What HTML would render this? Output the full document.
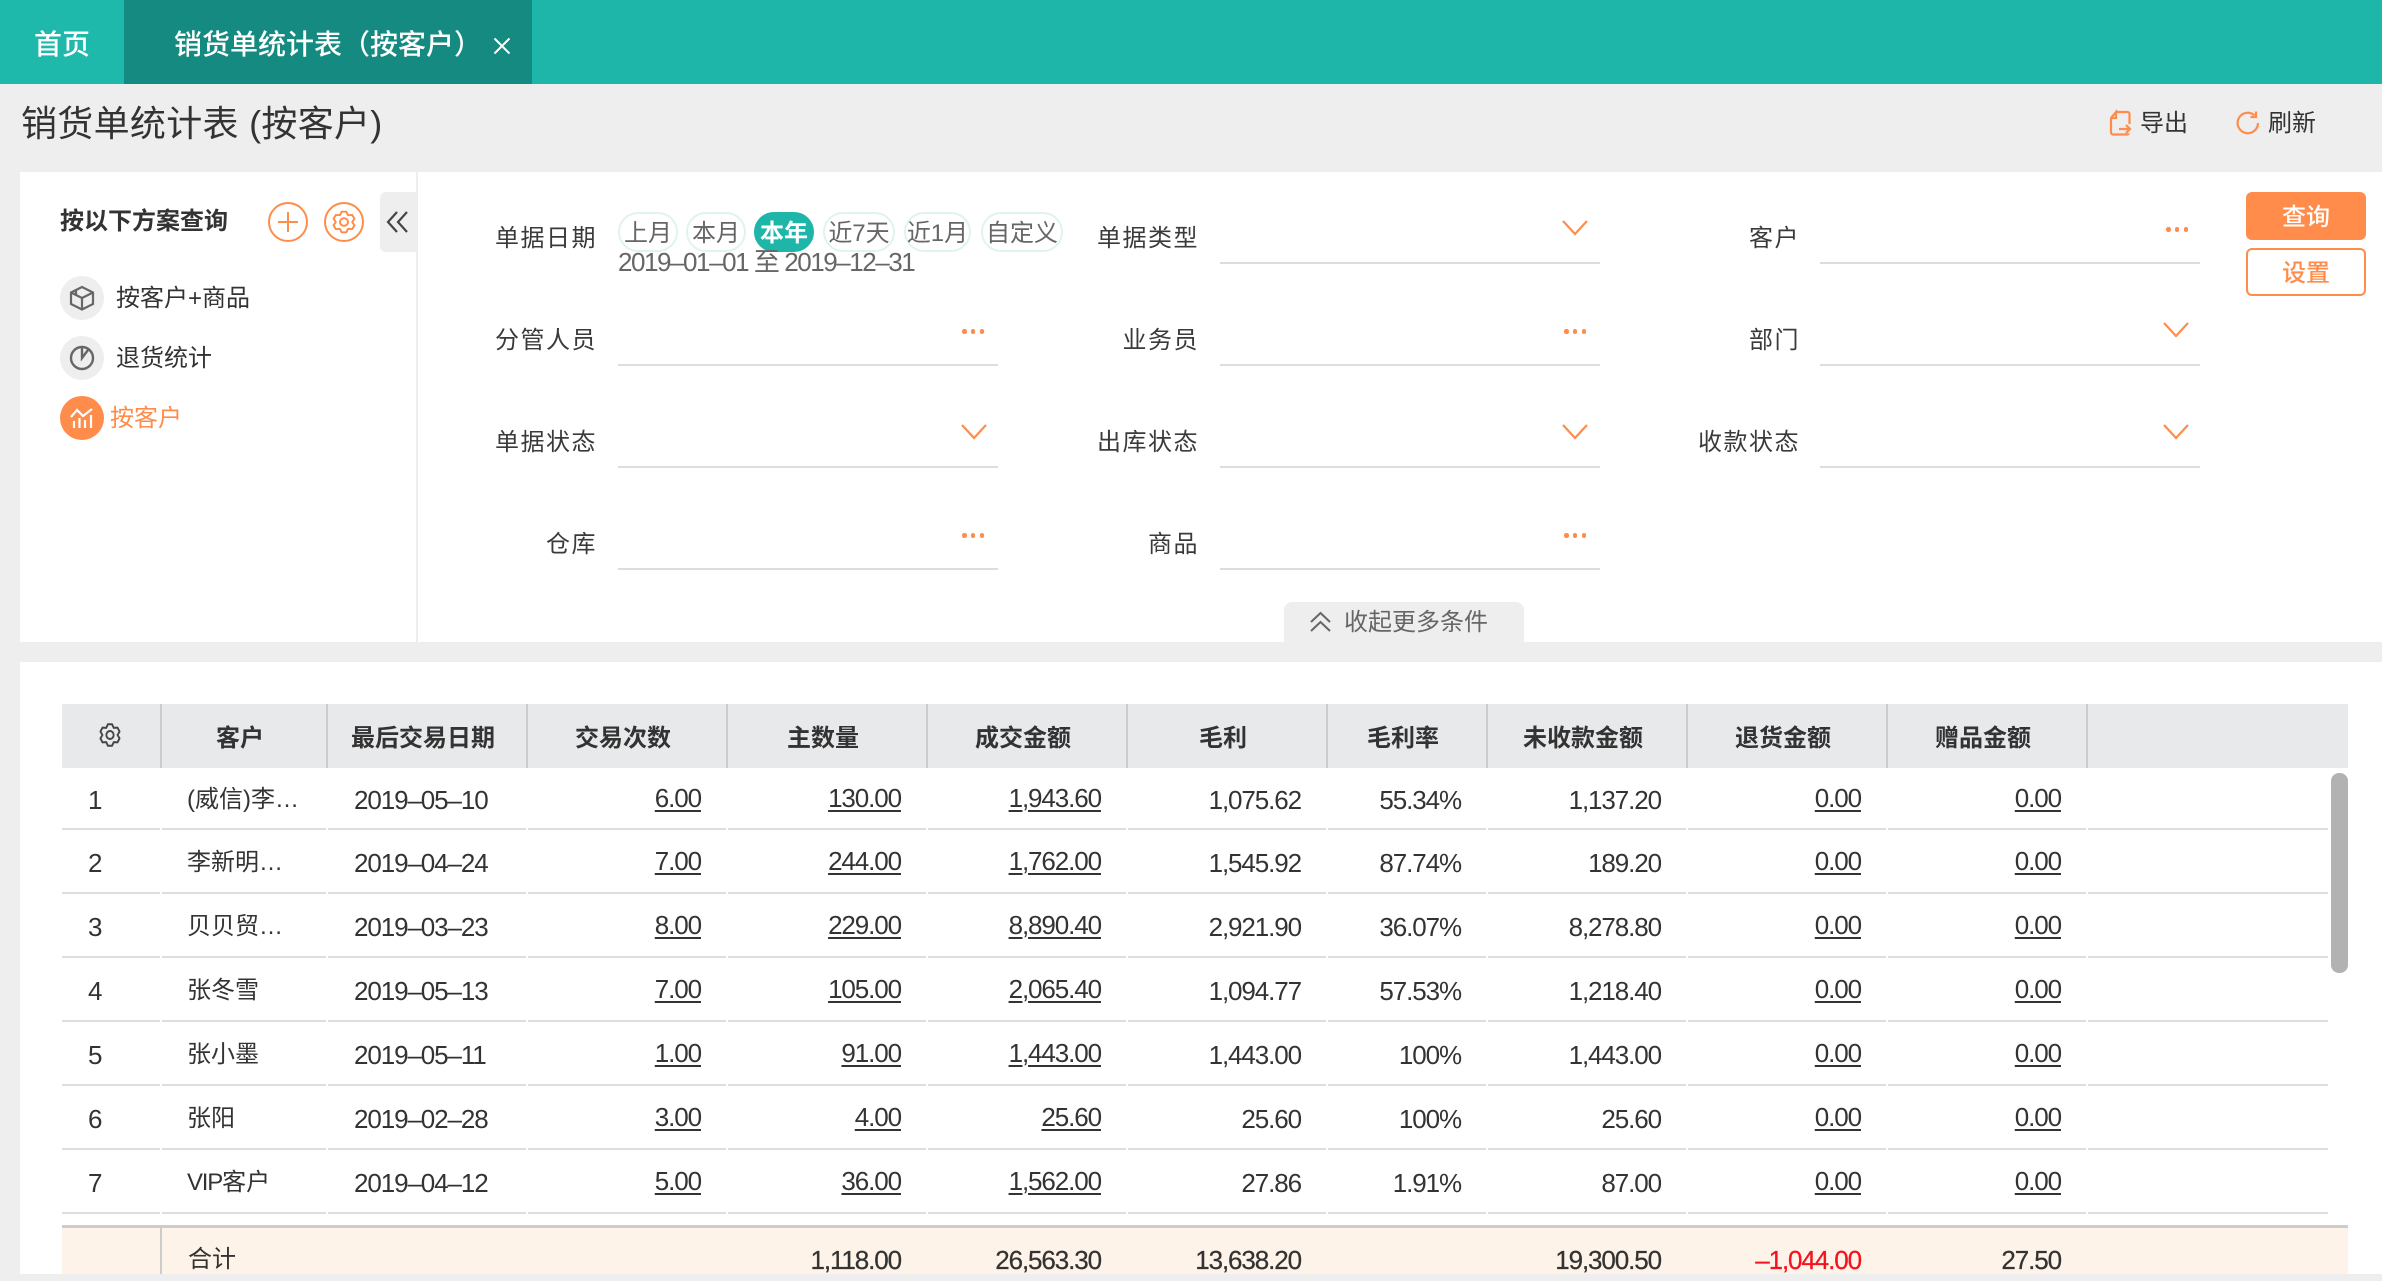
<!DOCTYPE html>
<html lang="zh">
<head>
<meta charset="utf-8">
<title>销货单统计表（按客户）</title>
<style>
html,body{margin:0;padding:0}
body{width:2382px;height:1274px;overflow:hidden;position:relative;background:#eeeeee;color:#333;font-family:"Liberation Sans","Noto Sans CJK SC",sans-serif;font-size:24px}
.a{position:absolute;white-space:nowrap}
.c{line-height:42px;height:40px}
.tab{top:0;height:84px;line-height:89px;color:#fff;font-size:28px;font-weight:500}
.panel{background:#fff;position:absolute}
.lbl{width:200px;text-align:right;letter-spacing:1.5px;line-height:44px;height:40px;color:#3a3a3a}
.line{height:2px;background:#dddddd;width:380px}
.dots{width:22px;height:4px;display:flex;justify-content:space-between}
.dots i{display:block;width:4.5px;height:4.5px;border-radius:50%;background:#ff8c4a}
.pill{top:212px;height:40px;line-height:40px;box-sizing:border-box;border:2px solid #dff3f1;border-radius:20px;text-align:center;color:#666;background:#fff}
.round{width:44px;height:44px;border-radius:50%;background:#eeeeee}
table{position:absolute;left:62px;top:704px;width:2266px;border-collapse:separate;border-spacing:0;table-layout:fixed;font-size:26px;letter-spacing:-1.1px}
th{height:64px;padding:0 8px 2px 0;background:#e8e9eb;border-right:2px solid #cccccc;box-sizing:border-box;font-weight:700;font-size:24px;letter-spacing:0;color:#333;text-align:center}
td{height:64px;box-sizing:border-box;border-bottom:2px solid #dddddd;padding:3px 27px 0 0;line-height:28px;text-align:right;white-space:nowrap;color:#333}
tr.f td{height:62px}
td.l{text-align:left;padding:3px 0 0 26px}
td.k{text-align:left;padding:3px 0 0 25px;font-size:24px;letter-spacing:0}
td.d{text-align:left;padding:3px 0 0 26px}
td u{position:relative;top:-2px;text-underline-offset:3px;text-decoration-thickness:2px}
.tot{position:absolute;left:62px;top:1225px;width:2286px;height:49px;background:#fdf3e8;border-top:3px solid #cccccc;box-sizing:border-box}
.tick{position:absolute;top:768px;width:2px;height:448px;background:#fff}
.n{font-size:26px;letter-spacing:-1.1px;line-height:40px;height:40px;top:1240px;-webkit-text-stroke:.25px currentColor}
</style>
</head>
<body>
<!-- top tabs -->
<div class="a" style="left:0;top:0;width:2382px;height:84px;background:#1db6a9"></div>
<div class="a" style="left:0;top:0;width:124px;height:84px;background:#1fb9ac"></div>
<div class="a" style="left:124px;top:0;width:408px;height:84px;background:#158a80"></div>
<div class="a tab" style="left:34px">首页</div>
<div class="a tab" style="left:174px">销货单统计表（按客户）</div>
<svg class="a" style="left:492px;top:36px" width="20" height="20" viewBox="0 0 20 20"><path d="M2.500 2.500L17.500 17.500M17.500 2.500L2.500 17.500" stroke="#fff" stroke-width="2" fill="none"/></svg>

<!-- title bar -->
<div class="a" style="left:21px;top:99px;font-size:36px;line-height:50px;color:#333;letter-spacing:.3px">销货单统计表 (按客户)</div>
<svg class="a" style="left:2108px;top:109px" width="24" height="28" viewBox="0 0 24 28" fill="none" stroke="#ff8c4a" stroke-width="2.200"><path d="M8 3H19.500a2 2 0 0 1 2 2V15M21 24.500a2 2 0 0 1-1.500 1H5a2 2 0 0 1-2-2V9L8 3V9H3"/><path d="M11 20H22M18 16L22 20L18 24"/></svg>
<div class="a c" style="left:2140px;top:103px">导出</div>
<svg class="a" style="left:2235px;top:110px" width="26" height="26" viewBox="0 0 26 26" fill="none" stroke="#ff8c4a" stroke-width="2.200"><path d="M23 13a10.200 10.200 0 1 1-3.500-7.700"/><path d="M21 1.500V7H15.500"/></svg>
<div class="a c" style="left:2268px;top:103px">刷新</div>

<!-- filter panel -->
<div class="panel" style="left:20px;top:172px;width:2362px;height:470px"></div>
<div class="a" style="left:416px;top:172px;width:2px;height:470px;background:#eeeeee"></div>

<!-- left scheme -->
<div class="a c" style="left:60px;top:201px;font-weight:700">按以下方案查询</div>
<svg class="a" style="left:268px;top:202px" width="40" height="40" viewBox="0 0 40 40" fill="none" stroke="#ff8c4a" stroke-width="2"><circle cx="20" cy="20" r="19"/><path d="M20 10V30M10 20H30"/></svg>
<svg class="a" style="left:324px;top:202px" width="40" height="40" viewBox="0 0 40 40" fill="none" stroke="#ff8c4a" stroke-width="2"><circle cx="20" cy="20" r="19"/><g transform="translate(8 8.500) scale(1 .96)" stroke-linejoin="round"><path d="M9.710 1.240L14.290 1.240L16.100 4.900L20.170 4.640L22.460 8.600L20.200 12L22.460 15.400L20.170 19.360L16.100 19.100L14.290 22.760L9.710 22.760L7.900 19.100L3.830 19.360L1.540 15.400L3.800 12L1.540 8.600L3.830 4.640L7.900 4.900Z"/><circle cx="12" cy="12" r="4"/></g></svg>
<div class="a" style="left:380px;top:192px;width:36px;height:60px;background:#eeeeee;border-radius:6px 0 0 6px"></div>
<svg class="a" style="left:386px;top:211px" width="22" height="22" viewBox="0 0 22 22" fill="none" stroke="#444" stroke-width="2.200"><path d="M11 1L2 11L11 21M21 1L12 11L21 21"/></svg>

<div class="a round" style="left:60px;top:276px"></div>
<svg class="a" style="left:68px;top:284px" width="28" height="28" viewBox="0 0 28 28" fill="none" stroke="#666" stroke-width="2.200"><path d="M14 3L25 8.500V20L14 25.500L3 20V8.500Z"/><path d="M3 8.500L14 14L25 8.500M14 14V25.500M8 6V11"/></svg>
<div class="a c" style="left:116px;top:278px">按客户+商品</div>
<div class="a round" style="left:60px;top:336px"></div>
<svg class="a" style="left:68px;top:344px" width="28" height="28" viewBox="0 0 28 28" fill="none" stroke="#666" stroke-width="2.400"><circle cx="14" cy="14" r="11"/><path d="M14 3V14L20 6"/></svg>
<div class="a c" style="left:116px;top:338px">退货统计</div>
<div class="a round" style="left:60px;top:396px;background:#ff8c4a"></div>
<svg class="a" style="left:68px;top:404px" width="28" height="28" viewBox="0 0 28 28" fill="none" stroke="#fff" stroke-width="2.200"><path d="M3 13L9 6L15 12L24 5"/><path d="M6 17V24M11.500 14V24M17 16V24M23 11V24"/></svg>
<div class="a c" style="left:110px;top:398px;color:#ff8c4a">按客户</div>

<!-- form row 1 -->
<div class="a lbl" style="left:397px;top:217px">单据日期</div>
<div class="a pill" style="left:618px;width:60px">上月</div>
<div class="a pill" style="left:686px;width:60px">本月</div>
<div class="a pill" style="left:754px;width:60px;background:#1db6a9;border-color:#1db6a9;color:#fff;font-weight:700">本年</div>
<div class="a pill" style="left:823px;width:72px">近7天</div>
<div class="a pill" style="left:904px;width:67px">近1月</div>
<div class="a pill" style="left:981px;width:82px">自定义</div>
<div class="a" style="left:618px;top:247px;line-height:30px;color:#666;font-size:26px;letter-spacing:-1.450px">2019–01–01 至 2019–12–31</div>

<div class="a lbl" style="left:999px;top:217px">单据类型</div>
<div class="a line" style="left:1220px;top:262px"></div>
<svg class="a" style="left:1562px;top:220px" width="26" height="16" viewBox="0 0 26 16" fill="none" stroke="#ff8c4a" stroke-width="2.200"><path d="M1 1L13 14L25 1"/></svg>

<div class="a lbl" style="left:1600px;top:217px">客户</div>
<div class="a line" style="left:1820px;top:262px"></div>
<div class="a dots" style="left:2166px;top:227px"><i></i><i></i><i></i></div>

<!-- row 2 -->
<div class="a lbl" style="left:397px;top:319px">分管人员</div>
<div class="a line" style="left:618px;top:364px"></div>
<div class="a dots" style="left:962px;top:329px"><i></i><i></i><i></i></div>

<div class="a lbl" style="left:999px;top:319px">业务员</div>
<div class="a line" style="left:1220px;top:364px"></div>
<div class="a dots" style="left:1564px;top:329px"><i></i><i></i><i></i></div>

<div class="a lbl" style="left:1600px;top:319px">部门</div>
<div class="a line" style="left:1820px;top:364px"></div>
<svg class="a" style="left:2163px;top:322px" width="26" height="16" viewBox="0 0 26 16" fill="none" stroke="#ff8c4a" stroke-width="2.200"><path d="M1 1L13 14L25 1"/></svg>

<!-- row 3 -->
<div class="a lbl" style="left:397px;top:421px">单据状态</div>
<div class="a line" style="left:618px;top:466px"></div>
<svg class="a" style="left:961px;top:424px" width="26" height="16" viewBox="0 0 26 16" fill="none" stroke="#ff8c4a" stroke-width="2.200"><path d="M1 1L13 14L25 1"/></svg>

<div class="a lbl" style="left:999px;top:421px">出库状态</div>
<div class="a line" style="left:1220px;top:466px"></div>
<svg class="a" style="left:1562px;top:424px" width="26" height="16" viewBox="0 0 26 16" fill="none" stroke="#ff8c4a" stroke-width="2.200"><path d="M1 1L13 14L25 1"/></svg>

<div class="a lbl" style="left:1600px;top:421px">收款状态</div>
<div class="a line" style="left:1820px;top:466px"></div>
<svg class="a" style="left:2163px;top:424px" width="26" height="16" viewBox="0 0 26 16" fill="none" stroke="#ff8c4a" stroke-width="2.200"><path d="M1 1L13 14L25 1"/></svg>

<!-- row 4 -->
<div class="a lbl" style="left:397px;top:523px">仓库</div>
<div class="a line" style="left:618px;top:568px"></div>
<div class="a dots" style="left:962px;top:533px"><i></i><i></i><i></i></div>

<div class="a lbl" style="left:999px;top:523px">商品</div>
<div class="a line" style="left:1220px;top:568px"></div>
<div class="a dots" style="left:1564px;top:533px"><i></i><i></i><i></i></div>

<!-- buttons -->
<div class="a" style="left:2246px;top:192px;width:120px;height:48px;line-height:51px;background:#ff8c4a;color:#fff;border-radius:6px;text-align:center;font-weight:500">查询</div>
<div class="a" style="left:2246px;top:248px;width:120px;height:48px;line-height:47px;box-sizing:border-box;border:2px solid #ff8c4a;color:#ff8c4a;border-radius:6px;text-align:center;background:#fff;font-weight:500">设置</div>

<!-- collapse tab -->
<div class="a" style="left:1284px;top:602px;width:240px;height:40px;background:#eeeeee;border-radius:8px 8px 0 0"></div>
<svg class="a" style="left:1309px;top:611px" width="23" height="22" viewBox="0 0 23 22" fill="none" stroke="#666" stroke-width="2"><path d="M2 11L11.500 2L21 11M2 20L11.500 11L21 20"/></svg>
<div class="a c" style="left:1344px;top:602px;color:#666">收起更多条件</div>

<!-- table panel -->
<div class="panel" style="left:20px;top:662px;width:2362px;height:612px"></div>

<table>
<colgroup><col style="width:100px"><col style="width:166px"><col style="width:200px"><col style="width:200px"><col style="width:200px"><col style="width:200px"><col style="width:200px"><col style="width:160px"><col style="width:200px"><col style="width:200px"><col style="width:200px"><col style="width:240px"></colgroup>
<tr><th></th><th>客户</th><th>最后交易日期</th><th>交易次数</th><th>主数量</th><th>成交金额</th><th>毛利</th><th>毛利率</th><th>未收款金额</th><th>退货金额</th><th>赠品金额</th><th style="border-right:0"></th></tr>
<tr class="f"><td class="l">1</td><td class="k">(威信)李…</td><td class="d">2019–05–10</td><td><u>6.00</u></td><td><u>130.00</u></td><td><u>1,943.60</u></td><td>1,075.62</td><td>55.34%</td><td>1,137.20</td><td><u>0.00</u></td><td><u>0.00</u></td><td></td></tr>
<tr><td class="l">2</td><td class="k">李新明…</td><td class="d">2019–04–24</td><td><u>7.00</u></td><td><u>244.00</u></td><td><u>1,762.00</u></td><td>1,545.92</td><td>87.74%</td><td>189.20</td><td><u>0.00</u></td><td><u>0.00</u></td><td></td></tr>
<tr><td class="l">3</td><td class="k">贝贝贸…</td><td class="d">2019–03–23</td><td><u>8.00</u></td><td><u>229.00</u></td><td><u>8,890.40</u></td><td>2,921.90</td><td>36.07%</td><td>8,278.80</td><td><u>0.00</u></td><td><u>0.00</u></td><td></td></tr>
<tr><td class="l">4</td><td class="k">张冬雪</td><td class="d">2019–05–13</td><td><u>7.00</u></td><td><u>105.00</u></td><td><u>2,065.40</u></td><td>1,094.77</td><td>57.53%</td><td>1,218.40</td><td><u>0.00</u></td><td><u>0.00</u></td><td></td></tr>
<tr><td class="l">5</td><td class="k">张小墨</td><td class="d">2019–05–11</td><td><u>1.00</u></td><td><u>91.00</u></td><td><u>1,443.00</u></td><td>1,443.00</td><td>100%</td><td>1,443.00</td><td><u>0.00</u></td><td><u>0.00</u></td><td></td></tr>
<tr><td class="l">6</td><td class="k">张阳</td><td class="d">2019–02–28</td><td><u>3.00</u></td><td><u>4.00</u></td><td><u>25.60</u></td><td>25.60</td><td>100%</td><td>25.60</td><td><u>0.00</u></td><td><u>0.00</u></td><td></td></tr>
<tr><td class="l">7</td><td class="k"><span style="letter-spacing:-1.200px">VIP</span>客户</td><td class="d">2019–04–12</td><td><u>5.00</u></td><td><u>36.00</u></td><td><u>1,562.00</u></td><td>27.86</td><td>1.91%</td><td>87.00</td><td><u>0.00</u></td><td><u>0.00</u></td><td></td></tr>
</table>
<div class="a" style="left:2328px;top:704px;width:20px;height:64px;background:#e8e9eb"></div>

<svg class="a" style="left:99px;top:723px" width="22" height="24" viewBox="0 0 24 24" preserveAspectRatio="none" fill="none" stroke="#444" stroke-width="2"><path stroke-linejoin="round" d="M9.710 1.240L14.290 1.240L16.100 4.900L20.170 4.640L22.460 8.600L20.200 12L22.460 15.400L20.170 19.360L16.100 19.100L14.290 22.760L9.710 22.760L7.900 19.100L3.830 19.360L1.540 15.400L3.800 12L1.540 8.600L3.830 4.640L7.900 4.900Z"/><circle cx="12" cy="12" r="4"/></svg>

<div class="tick" style="left:160px"></div><div class="tick" style="left:326px"></div><div class="tick" style="left:526px"></div><div class="tick" style="left:726px"></div><div class="tick" style="left:926px"></div><div class="tick" style="left:1126px"></div><div class="tick" style="left:1326px"></div><div class="tick" style="left:1486px"></div><div class="tick" style="left:1686px"></div><div class="tick" style="left:1886px"></div><div class="tick" style="left:2086px"></div>

<!-- scrollbar -->
<div class="a" style="left:2331px;top:773px;width:17px;height:200px;background:#b2b2b2;border-radius:8px"></div>

<!-- totals -->
<div class="tot"></div>
<div class="a" style="left:160px;top:1227px;width:2px;height:47px;background:#cccccc"></div>
<div class="a c" style="left:188px;top:1239px">合计</div>
<div class="a n" style="right:1481px">1,118.00</div>
<div class="a n" style="right:1281px">26,563.30</div>
<div class="a n" style="right:1081px">13,638.20</div>
<div class="a n" style="right:721px">19,300.50</div>
<div class="a n" style="right:521px;color:#f5121f">–1,044.00</div>
<div class="a n" style="right:321px">27.50</div>
</body>
</html>
